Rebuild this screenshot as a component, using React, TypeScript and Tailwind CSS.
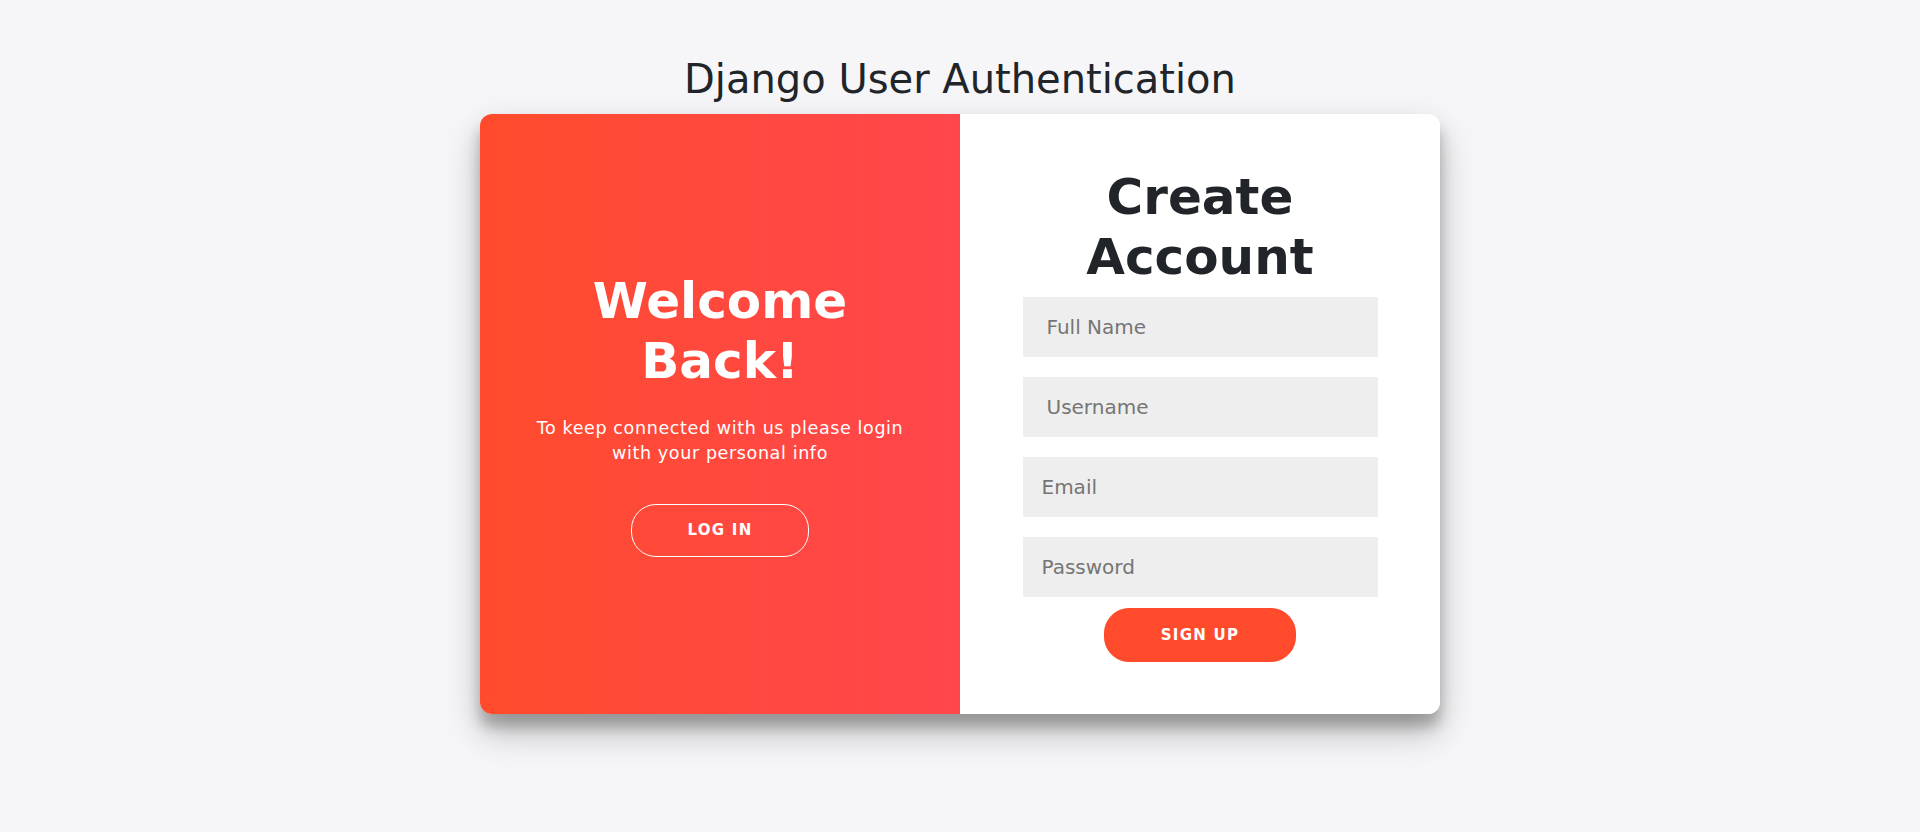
import React from "react";

export default function App() {
  return (
    <div className="min-h-screen w-full bg-[#f6f5f7] [font-family:'DejaVu_Sans','Noto_Sans',sans-serif] flex flex-col items-center pt-[55px]">
      <h2 className="text-[40px] leading-[48px] font-normal text-[#212529] mb-[11px]">
        Django User Authentication
      </h2>
      <div className="w-[960px] h-[600px] flex rounded-[12px] overflow-hidden bg-white shadow-[0_17.5px_35px_rgba(0,0,0,0.25),0_12.5px_12.5px_rgba(0,0,0,0.22)]">
        <div className="w-[480px] h-full bg-gradient-to-r from-[#FF4B2B] to-[#FF464C] flex flex-col items-center justify-center text-center px-[50px] text-white">
          <h1 className="text-[50px] leading-[60px] font-bold">
            Welcome
            <br />
            Back!
          </h1>
          <p className="text-[17.5px] leading-[25px] tracking-[0.625px] font-normal mt-[25px] mb-[37.5px]">
            To keep connected with us please login
            <br />
            with your personal info
          </p>
          <button className="rounded-[25px] border-[1.25px] border-white bg-transparent text-white text-[15px] leading-[21px] font-bold tracking-[1.25px] uppercase px-[56px] py-[15px]">
            Log In
          </button>
        </div>
        <form className="w-[480px] h-full bg-white flex flex-col items-center justify-center text-center px-[62.5px]">
          <h1 className="text-[50px] leading-[60px] font-bold text-[#212529]">
            Create
            <br />
            Account
          </h1>
          <input
            type="text"
            placeholder="Full Name"
            className="w-full h-[60px] my-[10px] bg-[#eeeeee] border-none outline-none text-[20px] pl-[24px] pr-[19px] text-[#212529] placeholder:text-[#757575]"
          />
          <input
            type="text"
            placeholder="Username"
            className="w-full h-[60px] my-[10px] bg-[#eeeeee] border-none outline-none text-[20px] pl-[24px] pr-[19px] text-[#212529] placeholder:text-[#757575]"
          />
          <input
            type="email"
            placeholder="Email"
            className="w-full h-[60px] my-[10px] bg-[#eeeeee] border-none outline-none text-[20px] pl-[19px] pr-[19px] text-[#212529] placeholder:text-[#757575]"
          />
          <input
            type="password"
            placeholder="Password"
            className="w-full h-[60px] my-[10px] bg-[#eeeeee] border-none outline-none text-[20px] pl-[19px] pr-[19px] text-[#212529] placeholder:text-[#757575]"
          />
          <button
            type="button"
            className="mt-[1px] rounded-[25px] border-[1.25px] border-[#FF4B2B] bg-[#FF4B2B] text-white text-[15px] leading-[22px] font-bold tracking-[1.25px] uppercase px-[56px] py-[15px]"
          >
            Sign Up
          </button>
        </form>
      </div>
    </div>
  );
}
